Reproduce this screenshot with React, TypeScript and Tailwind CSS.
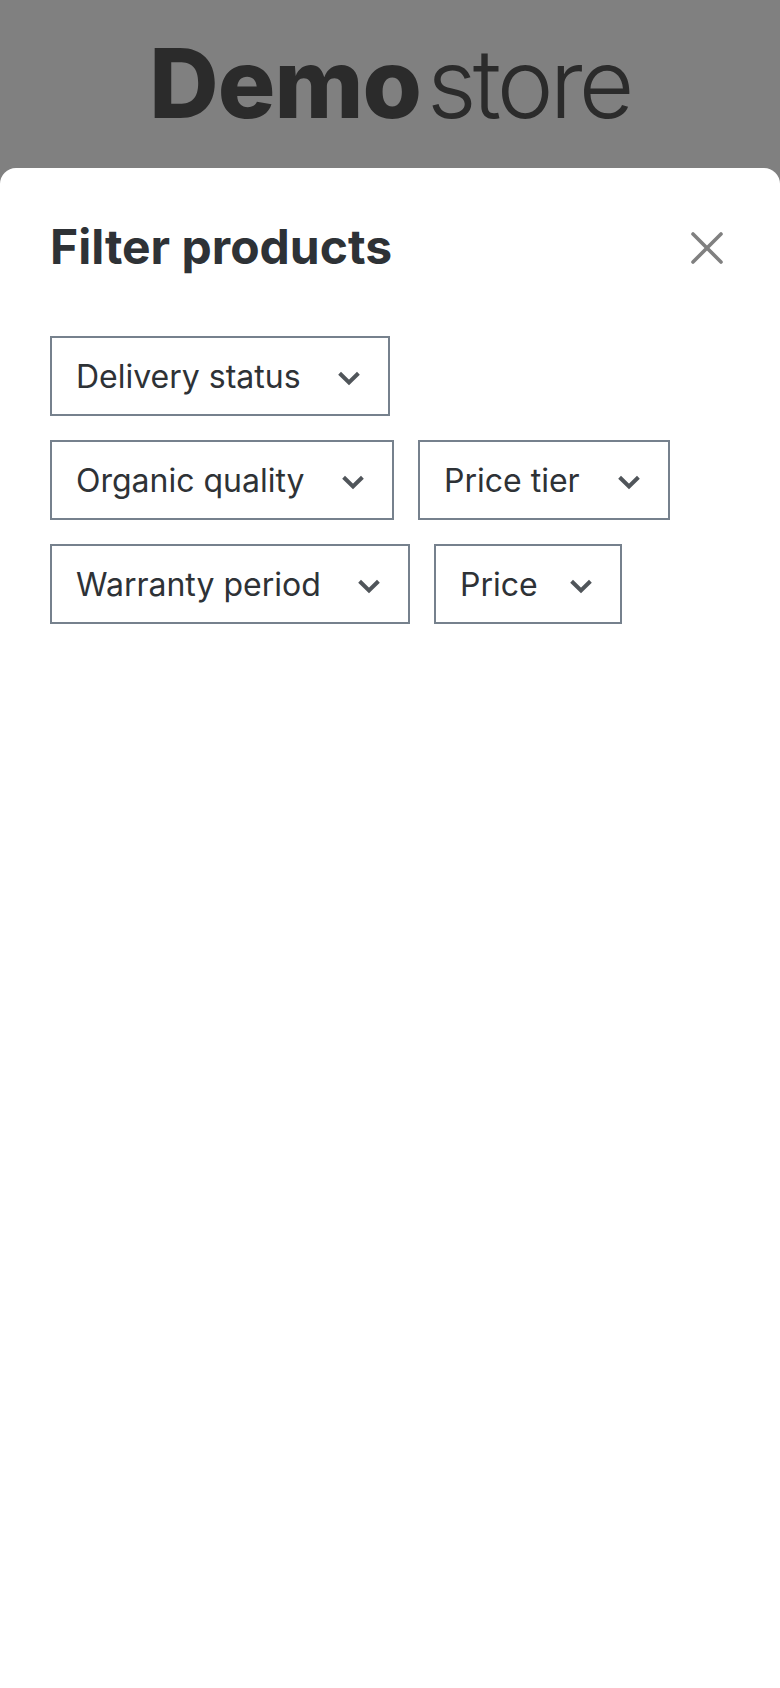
const rows = [
  [{ label: "Delivery status", w: "w-[340px]" }],
  [{ label: "Organic quality", w: "w-[344px]" }, { label: "Price tier", w: "w-[252px]" }],
  [{ label: "Warranty period", w: "w-[360px]" }, { label: "Price", w: "w-[188px]" }],
];

function Chip({ label, w }: { label: string; w: string }) {
  return (
    <button className={`${w} h-[80px] border-2 border-[#76818d] bg-white pl-[24px] pr-[24px] flex items-center justify-between text-[#2e3236] text-[32px] leading-none`}>
      <span className="whitespace-nowrap mt-[1px]">{label}</span>
      <svg width="24" height="24" viewBox="0 0 24 24" fill="none" className="text-[#50555a] mr-[3px] mt-[4px]">
        <path d="M2.6 7.2l9.4 9.2 9.4-9.2" stroke="currentColor" strokeWidth="4" />
      </svg>
    </button>
  );
}

export default function App() {
  return (
    <div className="w-[780px] h-[1688px] bg-[#808080] flex flex-col overflow-hidden font-['Inter','Liberation_Sans',sans-serif]">
      <header className="h-[168px] flex justify-center items-start pt-[23px]">
        <div className="flex items-baseline text-[#2b2b2b] text-[96px] leading-[120px]">
          <span className="font-extrabold tracking-[-0.01em]">Demo</span>
          <span className="font-light ml-[6px] tracking-[-0.04em]">store</span>
        </div>
      </header>
      <main className="flex-1 bg-white rounded-t-[16px] px-[50px] pt-[52px]">
        <div className="flex items-center justify-between h-[54px]">
          <h1 className="text-[48px] leading-none font-bold text-[#2e3236]">Filter products</h1>
          <svg width="32" height="32" viewBox="0 0 32 32" fill="none" className="mr-[7px] mt-[2px]">
            <path d="M2 2l28 28M30 2L2 30" stroke="#808080" strokeWidth="3.6" strokeLinecap="round" />
          </svg>
        </div>
        <div className="mt-[62px] flex flex-col gap-[24px]">
          {rows.map((row, i) => (
            <div key={i} className="flex gap-[24px]">
              {row.map((c) => (
                <Chip key={c.label} {...c} />
              ))}
            </div>
          ))}
        </div>
      </main>
    </div>
  );
}
